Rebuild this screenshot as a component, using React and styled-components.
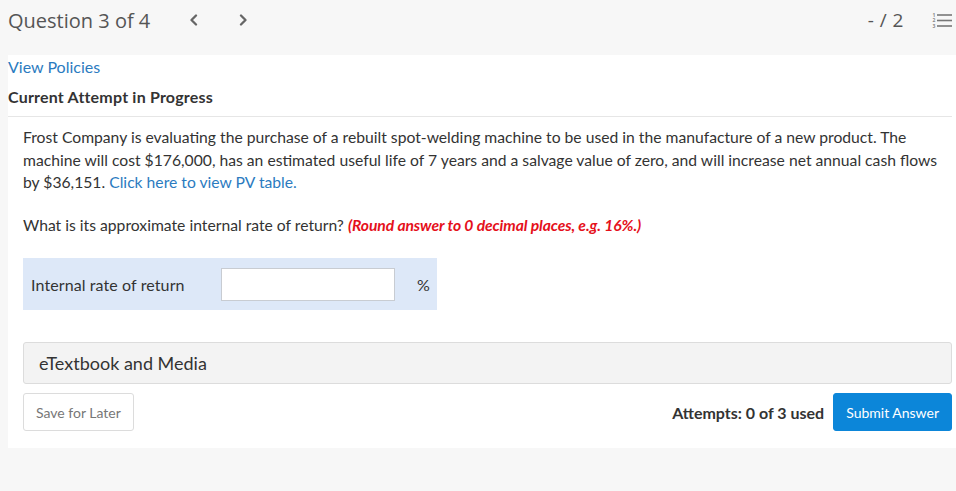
import React from "react";
import styled, { createGlobalStyle } from "styled-components";

const Global = createGlobalStyle`
  html, body { margin: 0; padding: 0; background: #f7f7f7; }
  body { font-family: Lato, "Open Sans", sans-serif; color: #333; }
  * { box-sizing: border-box; }
`;

const Page = styled.div`
  width: 956px;
  height: 491px;
  overflow: hidden;
  background: #f7f7f7;
`;

const Header = styled.header`
  height: 40px;
  display: flex;
  align-items: center;
  padding: 0 4px 0 8px;
  font-family: "Open Sans", sans-serif;
  color: #555;
`;

const Title = styled.h1`
  margin: 0;
  font-size: 20px;
  font-weight: 400;
  width: 181px;
`;

const NavBtn = styled.button`
  border: 0;
  background: none;
  padding: 0;
  color: #666;
  display: flex;
  align-items: center;
  margin-left: ${(p) => p.$ml}px;
`;

const Spacer = styled.div`
  flex: 1;
`;

const Score = styled.span`
  font-size: 19px;
  letter-spacing: 0.5px;
  margin-right: 28px;
`;

const Panel = styled.main`
  margin: 15px 0 0 8px;
  background: #fff;
  padding: 0 4px 17px 0;
`;

const Link = styled.a`
  color: #2b7bbf;
  text-decoration: none;
  cursor: pointer;
`;

const Policies = styled.div`
  font-size: 16px;
  line-height: 24px;
`;

const Attempt = styled.h2`
  margin: 6px 0 0;
  font-size: 16px;
  font-weight: 700;
  letter-spacing: 0.2px;
  line-height: 24px;
  padding-bottom: 7px;
  border-bottom: 1px solid #e6e6e6;
`;

const Question = styled.section`
  padding: 9px 0 0 15px;
`;

const Para = styled.p`
  margin: 0 7px 0 0;
  font-size: 15.7px;
  line-height: 22.5px;
  & + & {
    margin-top: 20px;
  }
`;

const Hint = styled.span`
  color: #e5101b;
  font-style: italic;
  font-weight: 700;
  letter-spacing: -0.1px;
`;

const AnswerBox = styled.div`
  margin-top: 22px;
  width: 414px;
  height: 52px;
  background: #dde8f8;
  display: flex;
  align-items: center;
  padding-left: 8px;
  font-size: 16px;
  letter-spacing: 0.1px;
`;

const AnswerLabel = styled.label`
  width: 190px;
`;

const AnswerInput = styled.input`
  width: 174px;
  height: 33px;
  border: 1px solid #c8ccd2;
  background: #fff;
  margin: 0;
  outline: none;
`;

const Unit = styled.span`
  margin-left: 22px;
`;

const Media = styled.div`
  margin-top: 32px;
  height: 42px;
  border: 1px solid #dcdcdc;
  border-radius: 3px;
  background: #f3f3f3;
  display: flex;
  align-items: center;
  padding-left: 15px;
  font-size: 18px;
`;

const Actions = styled.div`
  margin-top: 9px;
  display: flex;
  align-items: center;
`;

const Button = styled.button`
  height: 38px;
  font-family: Lato, sans-serif;
  font-size: 14px;
  border-radius: 3px;
  padding: 0 12px;
  border: 1px solid ${(p) => (p.$primary ? "#0c86d9" : "#dcdcdc")};
  background: ${(p) => (p.$primary ? "#0c86d9" : "#fff")};
  color: ${(p) => (p.$primary ? "#fff" : "#777")};
`;

const Used = styled.span`
  margin-left: auto;
  margin-right: 9px;
  font-size: 16px;
  font-weight: 700;
`;

const Chevron = ({ dir }) => (
  <svg width="9" height="12" viewBox="0 0 9 12" aria-hidden="true">
    <polyline
      points={dir === "left" ? "7,1.5 2.5,6 7,10.5" : "2,1.5 6.5,6 2,10.5"}
      fill="none"
      stroke="#666"
      strokeWidth="2.3"
      strokeLinecap="round"
      strokeLinejoin="round"
    />
  </svg>
);

const ListIcon = () => (
  <svg width="20" height="17" viewBox="0 0 20 17" aria-hidden="true">
    <g fill="#888" fontFamily="Open Sans, sans-serif" fontSize="5" fontWeight="700">
      <text x="0.5" y="4.5">1</text>
      <text x="0.5" y="10">2</text>
      <text x="0.5" y="15.5">3</text>
    </g>
    <g stroke="#777" strokeWidth="1.6">
      <line x1="5" y1="3" x2="20" y2="3" />
      <line x1="5" y1="8.5" x2="20" y2="8.5" />
      <line x1="5" y1="14" x2="20" y2="14" />
    </g>
  </svg>
);

export default function App() {
  return (
    <Page>
      <Global />
      <Header>
        <Title>Question 3 of 4</Title>
        <NavBtn $ml={0} aria-label="Previous">
          <Chevron dir="left" />
        </NavBtn>
        <NavBtn $ml={41} aria-label="Next">
          <Chevron dir="right" />
        </NavBtn>
        <Spacer />
        <Score>- / 2</Score>
        <ListIcon />
      </Header>
      <Panel>
        <Policies>
          <Link>View Policies</Link>
        </Policies>
        <Attempt>Current Attempt in Progress</Attempt>
        <Question>
          <Para>
            Frost Company is evaluating the purchase of a rebuilt spot-welding machine to be used in the
            manufacture of a new product. The machine will cost $176,000, has an estimated useful life of 7
            years and a salvage value of zero, and will increase net annual cash flows by $36,151.{" "}
            <Link>Click here to view PV table.</Link>
          </Para>
          <Para>
            What is its approximate internal rate of return?{" "}
            <Hint>(Round answer to 0 decimal places, e.g. 16%.)</Hint>
          </Para>
          <AnswerBox>
            <AnswerLabel>Internal rate of return</AnswerLabel>
            <AnswerInput type="text" />
            <Unit>%</Unit>
          </AnswerBox>
          <Media>eTextbook and Media</Media>
          <Actions>
            <Button>Save for Later</Button>
            <Used>Attempts: 0 of 3 used</Used>
            <Button $primary>Submit Answer</Button>
          </Actions>
        </Question>
      </Panel>
    </Page>
  );
}
